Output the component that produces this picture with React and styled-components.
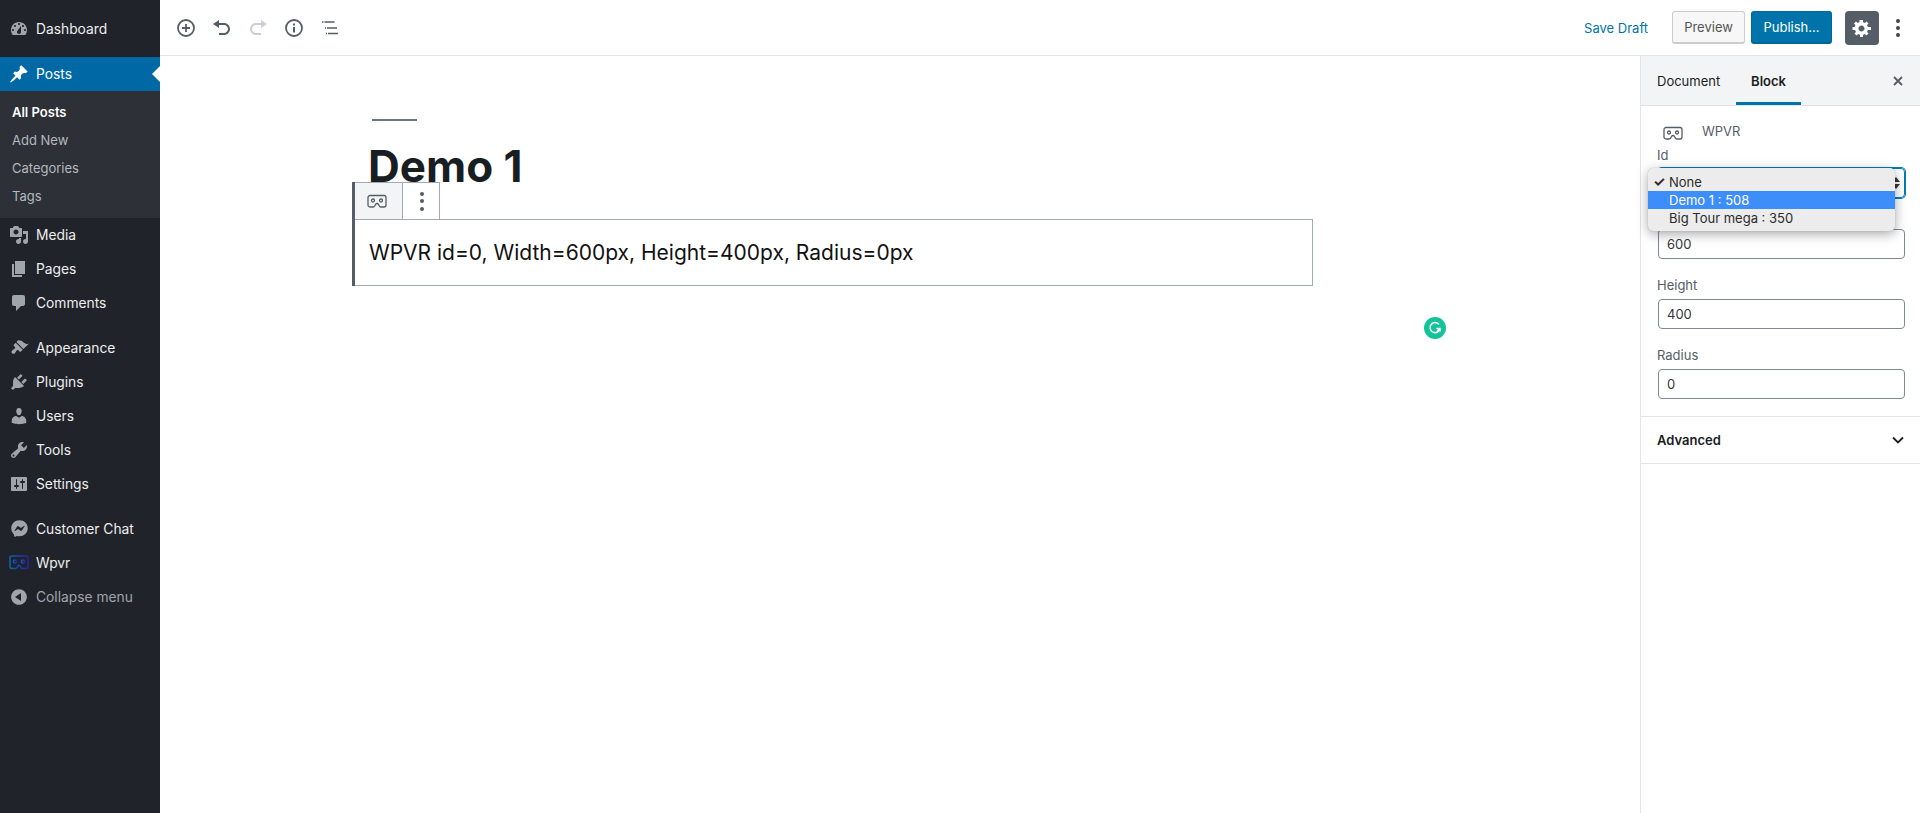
import React from "react";
import styled, { createGlobalStyle } from "styled-components";
import { FaFacebookMessenger } from "react-icons/fa";

const GlobalStyle = createGlobalStyle`
  html, body {
    margin: 0;
    padding: 0;
    height: 100%;
    background: #ffffff;
    font-family: Inter, "Liberation Sans", sans-serif;
    -webkit-font-smoothing: antialiased;
  }
  * {
    box-sizing: border-box;
  }
`;

const ICONS = {
  dashboard:
    "M3.76 16h12.48c1.1-1.37 1.76-3.11 1.76-5 0-4.42-3.58-8-8-8s-8 3.58-8 8c0 1.89.66 3.63 1.76 5zM10 4c.55 0 1 .45 1 1s-.45 1-1 1-1-.45-1-1 .45-1 1-1zM6 6c.55 0 1 .45 1 1s-.45 1-1 1-1-.45-1-1 .45-1 1-1zm8 0c.55 0 1 .45 1 1s-.45 1-1 1-1-.45-1-1 .45-1 1-1zm-5.37 5.55L12 7v6c0 1.1-.9 2-2 2s-2-.9-2-2c0-.57.24-1.08.63-1.45zM4 10c.55 0 1 .45 1 1s-.45 1-1 1-1-.45-1-1 .45-1 1-1zm12 0c.55 0 1 .45 1 1s-.45 1-1 1-1-.45-1-1 .45-1 1-1z",
  pin: "M10.44 3.02l1.82-1.82 6.36 6.35-1.83 1.82c-1.05-.68-2.48-.57-3.41.36l-.75.75c-.92.93-1.04 2.35-.35 3.41l-1.83 1.82-2.41-2.41-2.8 2.79c-.42.42-3.38 2.71-3.8 2.29s1.86-3.39 2.28-3.81l2.79-2.79L4.1 9.36l1.83-1.82c1.05.69 2.48.57 3.4-.36l.75-.75c.93-.92 1.05-2.35.36-3.41z",
  media:
    "M13 11V4c0-.55-.45-1-1-1h-1.67L9 1H5L3.67 3H2c-.55 0-1 .45-1 1v7c0 .55.45 1 1 1h10c.55 0 1-.45 1-1zM7 4.5c1.38 0 2.5 1.12 2.5 2.5S8.38 9.5 7 9.5 4.5 8.38 4.5 7 5.62 4.5 7 4.5zM14 6h5v10.5c0 1.38-1.12 2.5-2.5 2.5S14 17.88 14 16.5s1.12-2.5 2.5-2.5c.17 0 .34.02.5.05V9h-3V6zm-4 8.05V13h2v3.5c0 1.38-1.12 2.5-2.5 2.5S7 17.88 7 16.5 8.12 14 9.5 14c.17 0 .34.02.5.05z",
  page: "M6 15V2h10v13H6zm-1 1h8v2H3V5h2v11z",
  comments:
    "M5 2h9c1.1 0 2 .9 2 2v7c0 1.1-.9 2-2 2h-2l-5 5v-5H5c-1.1 0-2-.9-2-2V4c0-1.1.9-2 2-2z",
  appearance:
    "M14.48 11.06L7.41 3.99l1.5-1.5c.5-.56 2.3-.47 3.51.32 1.21.8 1.43 1.28 2.91 2.1 1.18.64 2.45 1.26 4.45.85zm-.71.71L6.7 4.7 4.93 6.47c-.39.39-.39 1.02 0 1.41l1.06 1.06c.39.39.39 1.03 0 1.42-.6.6-1.43 1.27-2.21 1.59-.26.11-.5.27-.71.48-.78.78-.78 2.05 0 2.83.78.78 2.05.78 2.83 0 .21-.21.37-.45.48-.71.32-.78.99-1.61 1.59-2.21.39-.39 1.02-.39 1.41 0l1.06 1.06c.39.39 1.02.39 1.41 0z",
  plugins:
    "M13.11 4.36L9.87 7.6 8 5.73l3.24-3.24c.35-.34 1.05-.2 1.56.32.52.51.66 1.21.31 1.55zm-8 1.77l.91-1.12 9.01 9.01-1.19.84c-.71.71-2.63 1.16-3.82 1.16H6.14L4.9 17.26c-.59.59-1.54.59-2.12 0-.59-.58-.59-1.53 0-2.12l1.24-1.24v-3.88c0-1.13.4-3.19 1.09-3.89zm7.26 3.97l3.24-3.24c.34-.35 1.04-.21 1.55.31.52.51.66 1.21.31 1.55l-3.24 3.25z",
  users:
    "M10 9.25c-2.27 0-2.73-3.44-2.73-3.44C7 4.02 7.82 2 9.97 2c2.16 0 2.98 2.02 2.71 3.81 0 0-.41 3.44-2.68 3.44zm0 2.57L12.72 10c2.39 0 4.52 2.33 4.52 4.53v2.49s-3.65 1.13-7.24 1.13c-3.65 0-7.24-1.13-7.24-1.13v-2.49c0-2.25 1.94-4.48 4.47-4.48z",
  tools:
    "M16.68 9.77c-1.34 1.34-3.3 1.67-4.95.99l-5.41 6.52c-.99.99-2.59.99-3.58 0s-.99-2.59 0-3.57l6.52-5.42c-.68-1.65-.35-3.61.99-4.95 1.28-1.28 3.12-1.62 4.72-1.06l-2.89 2.89 2.82 2.82 2.86-2.87c.53 1.58.18 3.39-1.08 4.65zM3.81 16.21c.4.39 1.03.39 1.42 0 .4-.4.4-1.03 0-1.43-.39-.39-1.02-.39-1.42 0-.39.4-.39 1.03 0 1.43z",
  settings:
    "M18 16V4c0-.55-.45-1-1-1H3c-.55 0-1 .45-1 1v12c0 .55.45 1 1 1h14c.55 0 1-.45 1-1zM8 11h1c.55 0 1 .45 1 1s-.45 1-1 1H8v1.5c0 .28-.22.5-.5.5s-.5-.22-.5-.5V13H6c-.55 0-1-.45-1-1s.45-1 1-1h1V5.5c0-.28.22-.5.5-.5s.5.22.5.5V11zm5-2h-1c-.55 0-1-.45-1-1s.45-1 1-1h1V5.5c0-.28.22-.5.5-.5s.5.22.5.5V7h1c.55 0 1 .45 1 1s-.45 1-1 1h-1v5.5c0 .28-.22.5-.5.5s-.5-.22-.5-.5V9z",
  collapse:
    "M10 2.16c4.33 0 7.84 3.51 7.84 7.84s-3.51 7.84-7.84 7.84S2.16 14.33 2.16 10 5.67 2.16 10 2.16zM12 14V6l-6 4z",
  undo: "M12 5H7V2L1 6l6 4V7h5c2.2 0 4 1.8 4 4s-1.8 4-4 4H7v2h5c3.31 0 6-2.69 6-6s-2.69-6-6-6z",
  redo: "M8 5h5V2l6 4-6 4V7H8c-2.2 0-4 1.8-4 4s1.8 4 4 4h5v2H8c-3.31 0-6-2.69-6-6s2.69-6 6-6z",
  gear: "M18 12h-2.18c-.17.7-.44 1.35-.81 1.93l1.54 1.54-2.1 2.1-1.54-1.54c-.58.36-1.23.64-1.91.81V19H8v-2.18c-.68-.17-1.33-.45-1.91-.81l-1.54 1.54-2.12-2.12 1.54-1.54c-.36-.58-.64-1.23-.81-1.91H.5V9h2.16c.17-.68.45-1.33.81-1.91L1.93 5.55l2.12-2.12 1.54 1.54c.58-.36 1.23-.64 1.91-.81V2H11v2.16c.68.17 1.33.45 1.91.81l1.54-1.54 2.12 2.12-1.54 1.54c.36.58.64 1.23.81 1.91H19V12zM9.5 13.5c1.66 0 3-1.34 3-3s-1.34-3-3-3-3 1.34-3 3 1.34 3 3 3z",
};

const Glyph = ({ name, size = 20, color = "currentColor" }) => (
  <svg width={size} height={size} viewBox="0 0 20 20" fill={color} fillRule="evenodd">
    <path d={ICONS[name]} />
  </svg>
);

const Goggles = ({ width = 20, color = "#555d66" }) => (
  <svg width={width} height={width * 0.75} viewBox="0 0 20 15" fill="none" stroke={color} strokeWidth="1.3">
    <path d="M3 1.500h14a2 2 0 0 1 2 2v7.500a2 2 0 0 1-2 2h-3c-1 0-1.500-.5-2-1.500l-.5-1c-.4-.7-.8-1-1.500-1s-1.100.3-1.500 1l-.5 1c-.5 1-1 1.500-2 1.500H3a2 2 0 0 1-2-2V3.500a2 2 0 0 1 2-2z" />
    <circle cx="6" cy="6.500" r="1.500" />
    <circle cx="14" cy="6.500" r="1.500" />
  </svg>
);

const Page = styled.div`
  display: flex;
  height: 100vh;
  overflow: hidden;
`;

const Sidebar = styled.nav`
  width: 160px;
  flex-shrink: 0;
  padding-top: 12px;
  background: #20232a;
`;

const MenuItem = styled.div`
  position: relative;
  display: flex;
  align-items: center;
  height: 34px;
  padding: 0 0 1px 9px;
  margin-bottom: ${({ $gap }) => ($gap ? "11px" : "0")};
  font-size: 13.8px;
  color: ${({ $active, $muted }) => ($active ? "#ffffff" : $muted ? "#a0a5aa" : "#eeeeee")};
  background: ${({ $active }) => ($active ? "#0069a5" : "transparent")};
`;

const MenuIcon = styled.span`
  display: flex;
  justify-content: center;
  width: 20px;
  margin-right: 7px;
  color: ${({ $active }) => ($active ? "#ffffff" : "#a0a5aa")};
`;

const ActiveArrow = styled.span`
  position: absolute;
  right: 0;
  top: 9px;
  border: 8px solid transparent;
  border-left-width: 0;
  border-right-color: #ffffff;
`;

const SubMenu = styled.div`
  padding: 7px 0 8px;
  background: #2d3036;
`;

const SubItem = styled.div`
  display: flex;
  align-items: center;
  height: 28px;
  padding-left: 12px;
  font-size: 13px;
  font-weight: ${({ $current }) => ($current ? 600 : 400)};
  color: ${({ $current }) => ($current ? "#ffffff" : "#b4b9be")};
`;

const Main = styled.div`
  flex: 1;
  display: flex;
  flex-direction: column;
  min-width: 0;
`;

const TopBar = styled.header`
  display: flex;
  align-items: center;
  justify-content: space-between;
  height: 56px;
  flex-shrink: 0;
  padding: 0 7px 0 8px;
  border-bottom: 1px solid #e2e4e7;
`;

const ToolGroup = styled.div`
  display: flex;
  align-items: center;
`;

const ToolIcon = styled.span`
  display: flex;
  align-items: center;
  justify-content: center;
  width: 36px;
  height: 36px;
  color: ${({ $disabled }) => ($disabled ? "#ccd0d4" : "#555d66")};
`;

const SaveDraft = styled.span`
  margin-right: 24px;
  font-size: 13px;
  color: #0073aa;
`;

const Button = styled.span`
  display: flex;
  align-items: center;
  justify-content: center;
  height: 33px;
  margin-right: 6px;
  font-size: 13px;
  border-radius: 3px;
  border: 1px solid ${({ $primary }) => ($primary ? "#006799" : "#cccccc")};
  border-bottom-width: 2px;
  width: ${({ $primary }) => ($primary ? "81px" : "73px")};
  color: ${({ $primary }) => ($primary ? "#ffffff" : "#555555")};
  background: ${({ $primary }) => ($primary ? "#0073aa" : "#f7f7f7")};
`;

const GearButton = styled.span`
  display: flex;
  align-items: center;
  justify-content: center;
  width: 34px;
  height: 34px;
  margin-left: 7px;
  border-radius: 4px;
  color: #ffffff;
  background: #555d66;
`;

const MoreDots = styled.span`
  display: flex;
  flex-direction: column;
  align-items: center;
  gap: 3px;
  width: 30px;
  margin-left: 4px;
  padding-right: 1px;
`;

const Dot = styled.i`
  width: 4px;
  height: 4px;
  border-radius: 50%;
  background: ${({ $dark }) => ($dark ? "#40464d" : "#555d66")};
`;

const Body = styled.div`
  flex: 1;
  display: flex;
  min-height: 0;
`;

const Editor = styled.main`
  position: relative;
  flex: 1;
  padding: 63px 0 0 192px;
`;

const TitleRule = styled.div`
  width: 45px;
  height: 2px;
  margin-left: 20px;
  background: #6c7781;
`;

const Title = styled.h1`
  margin: 19px 0 0 16px;
  height: 42px;
  font-size: 44px;
  line-height: 52px;
  font-weight: 700;
  color: #191e23;
`;

const Block = styled.section`
  width: 961px;
  border-left: 3px solid #555d66;
`;

const BlockToolbar = styled.div`
  display: flex;
  width: 85px;
  height: 37px;
  border-top: 1px solid #a2aab2;
  border-right: 1px solid #a2aab2;
`;

const BlockTool = styled.span`
  display: flex;
  align-items: center;
  justify-content: center;
  width: ${({ $wide }) => ($wide ? "49px" : "36px")};
  padding-right: ${({ $wide }) => ($wide ? "3px" : "0")};
  padding-left: ${({ $wide }) => ($wide ? "0" : "2px")};
  border-right: ${({ $wide }) => ($wide ? "1px solid #a2aab2" : "none")};
  background: ${({ $wide }) => ($wide ? "#f3f4f5" : "#ffffff")};
`;

const BlockDots = styled.span`
  display: flex;
  flex-direction: column;
  gap: 3.500px;
`;

const BlockBody = styled.div`
  display: flex;
  align-items: center;
  height: 67px;
  padding-left: 14px;
  border: 1px solid #a2aab2;
  border-left: none;
  font-size: 21px;
  color: #111111;
`;

const Grammarly = styled.span`
  position: absolute;
  left: 1264px;
  top: 261px;
  display: flex;
  align-items: center;
  justify-content: center;
  width: 22px;
  height: 22px;
  border-radius: 50%;
  background: #15c39a;
`;

const Panel = styled.aside`
  width: 280px;
  flex-shrink: 0;
  border-left: 1px solid #e2e4e7;
`;

const Tabs = styled.div`
  display: flex;
  align-items: stretch;
  height: 50px;
  background: #f3f4f5;
  border-bottom: 1px solid #e2e4e7;
`;

const Tab = styled.span`
  display: flex;
  align-items: center;
  justify-content: ${({ $active }) => ($active ? "center" : "flex-start")};
  width: ${({ $active }) => ($active ? "65px" : "95px")};
  padding-left: ${({ $active }) => ($active ? "0" : "16px")};
  font-size: 13px;
  font-weight: ${({ $active }) => ($active ? 600 : 400)};
  color: #191e23;
  box-shadow: ${({ $active }) => ($active ? "inset 0 -3px 0 #0073aa" : "none")};
`;

const TabClose = styled.span`
  display: flex;
  align-items: center;
  margin-left: auto;
  margin-right: 15px;
  color: #555d66;
`;

const BlockCard = styled.div`
  display: flex;
  align-items: flex-start;
  height: 40px;
  padding: 20px 0 0 22px;
  font-size: 13px;
  color: #555d66;
`;

const CardName = styled.span`
  margin: -3px 0 0 19px;
`;

const Fields = styled.div`
  padding: 0 15px 0 16px;
`;

const Field = styled.div`
  position: relative;
  margin-bottom: ${({ $select }) => ($select ? "6px" : "15px")};
`;

const FieldLabel = styled.label`
  display: block;
  height: ${({ $tight }) => ($tight ? "22px" : "21px")};
  margin-bottom: ${({ $tight }) => ($tight ? "0" : "4px")};
  font-size: 13px;
  line-height: ${({ $tight }) => ($tight ? "18px" : "22px")};
  color: #555d66;
`;

const Input = styled.div`
  display: flex;
  align-items: center;
  height: 30px;
  margin-left: 1px;
  padding-left: 8px;
  font-size: 13px;
  color: #32373c;
  border: 1px solid #7e8993;
  border-radius: 4px;
`;

const SelectBox = styled(Input)`
  justify-content: flex-end;
  padding-right: 4px;
  border-color: #007cba;
  box-shadow: 0 0 0 1px #007cba;
`;

const SelectArrows = styled.span`
  display: flex;
  flex-direction: column;
  gap: 2px;
`;

const SelectArrow = styled.i`
  width: 0;
  height: 0;
  border: 4px solid transparent;
  border-top-width: ${({ $up }) => ($up ? "0" : "5px")};
  border-bottom-width: ${({ $up }) => ($up ? "5px" : "0")};
  border-top-color: ${({ $up }) => ($up ? "transparent" : "#32373c")};
  border-bottom-color: ${({ $up }) => ($up ? "#32373c" : "transparent")};
`;

const Popup = styled.div`
  position: absolute;
  left: -9px;
  top: 22px;
  z-index: 2;
  width: 247px;
  height: 63px;
  padding-top: 5px;
  background: #ececec;
  border-radius: 5px;
  box-shadow: 0 3px 12px rgba(0, 0, 0, 0.35), 0 0 1px rgba(0, 0, 0, 0.3);
`;

const PopupItem = styled.div`
  position: relative;
  height: 18px;
  padding-left: 21px;
  font-size: 13px;
  line-height: 18px;
  color: ${({ $highlight }) => ($highlight ? "#ffffff" : "#2b2b2b")};
  background: ${({ $highlight }) => ($highlight ? "#3d8efa" : "transparent")};
`;

const PopupCheck = styled.span`
  position: absolute;
  left: 5px;
  top: 0;
  font-size: 14px;
  font-weight: 700;
`;

const Advanced = styled.div`
  display: flex;
  align-items: center;
  justify-content: space-between;
  height: 48px;
  margin-top: 17px;
  padding: 0 15px 0 16px;
  font-size: 13px;
  font-weight: 600;
  color: #191e23;
  border-top: 1px solid #e2e4e7;
  border-bottom: 1px solid #e2e4e7;
`;

const MENU_TOP = [{ icon: "dashboard", label: "Dashboard", gap: true }];

const MENU_MIDDLE = [
  { icon: "media", label: "Media" },
  { icon: "page", label: "Pages" },
  { icon: "comments", label: "Comments", gap: true },
  { icon: "appearance", label: "Appearance" },
  { icon: "plugins", label: "Plugins" },
  { icon: "users", label: "Users" },
  { icon: "tools", label: "Tools" },
  { icon: "settings", label: "Settings", gap: true },
];

const SUB_ITEMS = ["All Posts", "Add New", "Categories", "Tags"];

const renderItem = (item) => (
  <MenuItem key={item.label} $gap={item.gap}>
    <MenuIcon>
      <Glyph name={item.icon} />
    </MenuIcon>
    {item.label}
  </MenuItem>
);

const App = () => (
  <Page>
    <GlobalStyle />
    <Sidebar>
      {MENU_TOP.map(renderItem)}
      <MenuItem $active>
        <MenuIcon $active>
          <Glyph name="pin" />
        </MenuIcon>
        Posts
        <ActiveArrow />
      </MenuItem>
      <SubMenu>
        {SUB_ITEMS.map((label, i) => (
          <SubItem key={label} $current={i === 0}>
            {label}
          </SubItem>
        ))}
      </SubMenu>
      {MENU_MIDDLE.map(renderItem)}
      <MenuItem>
        <MenuIcon>
          <FaFacebookMessenger size={17} />
        </MenuIcon>
        Customer Chat
      </MenuItem>
      <MenuItem>
        <MenuIcon>
          <svg width="21" height="15" viewBox="0 0 20 15" fill="none" strokeWidth="1.500">
            <defs>
              <linearGradient id="wpvrGrad" x1="0" x2="1" y1="0" y2="0">
                <stop offset="0" stopColor="#0c62b0" />
                <stop offset="1" stopColor="#2a20a8" />
              </linearGradient>
            </defs>
            <path
              stroke="url(#wpvrGrad)"
              d="M3 1h14a2 2 0 0 1 2 2v8.500a2 2 0 0 1-2 2h-3.500c-1 0-1.500-.5-2-1.500l-.5-1c-.3-.5-.7-.7-1-.7s-.7.2-1 .7l-.5 1c-.5 1-1 1.500-2 1.500H3a2 2 0 0 1-2-2V3a2 2 0 0 1 2-2z"
            />
            <circle cx="6" cy="6.500" r="1.600" stroke="url(#wpvrGrad)" />
            <circle cx="14" cy="6.500" r="1.600" stroke="url(#wpvrGrad)" />
          </svg>
        </MenuIcon>
        Wpvr
      </MenuItem>
      <MenuItem $muted>
        <MenuIcon>
          <Glyph name="collapse" />
        </MenuIcon>
        Collapse menu
      </MenuItem>
    </Sidebar>

    <Main>
      <TopBar>
        <ToolGroup>
          <ToolIcon>
            <svg width="20" height="20" viewBox="0 0 20 20" fill="none" stroke="currentColor" strokeWidth="1.800">
              <circle cx="10" cy="10" r="8" />
              <path d="M10 6v8M6 10h8" />
            </svg>
          </ToolIcon>
          <ToolIcon>
            <Glyph name="undo" />
          </ToolIcon>
          <ToolIcon $disabled>
            <Glyph name="redo" />
          </ToolIcon>
          <ToolIcon>
            <svg width="20" height="20" viewBox="0 0 20 20" fill="none" stroke="currentColor" strokeWidth="1.800">
              <circle cx="10" cy="10" r="8" />
              <path d="M10 9v5.500" strokeWidth="2" />
              <path d="M10 5.500v2" strokeWidth="2" />
            </svg>
          </ToolIcon>
          <ToolIcon>
            <svg width="20" height="20" viewBox="0 0 20 20" fill="none" stroke="currentColor" strokeWidth="1.500">
              <path d="M2 4h1.500M4.500 4h10M5 10h1M7 10h10M6 15.500h1M8 15.500h10" />
            </svg>
          </ToolIcon>
        </ToolGroup>
        <ToolGroup>
          <SaveDraft>Save Draft</SaveDraft>
          <Button>Preview</Button>
          <Button $primary>Publish...</Button>
          <GearButton>
            <Glyph name="gear" size={20} />
          </GearButton>
          <MoreDots>
            <Dot $dark />
            <Dot $dark />
            <Dot $dark />
          </MoreDots>
        </ToolGroup>
      </TopBar>

      <Body>
        <Editor>
          <TitleRule />
          <Title>Demo 1</Title>
          <Block>
            <BlockToolbar>
              <BlockTool $wide>
                <Goggles />
              </BlockTool>
              <BlockTool>
                <BlockDots>
                  <Dot />
                  <Dot />
                  <Dot />
                </BlockDots>
              </BlockTool>
            </BlockToolbar>
            <BlockBody>WPVR id=0, Width=600px, Height=400px, Radius=0px</BlockBody>
          </Block>
          <Grammarly>
            <svg width="14" height="14" viewBox="0 0 14 14" fill="none" stroke="#ffffff" strokeWidth="1.500">
              <path d="M11 3.500A5 5 0 1 0 12 7.500H8.500M12 7.500v3M12 7.500l-3 3" />
            </svg>
          </Grammarly>
        </Editor>

        <Panel>
          <Tabs>
            <Tab>Document</Tab>
            <Tab $active>Block</Tab>
            <TabClose>
              <svg width="14" height="14" viewBox="0 0 14 14" stroke="currentColor" strokeWidth="1.800">
                <path d="M3 3l8 8M11 3l-8 8" />
              </svg>
            </TabClose>
          </Tabs>
          <BlockCard>
            <Goggles />
            <CardName>WPVR</CardName>
          </BlockCard>
          <Fields>
            <Field $select>
              <FieldLabel $tight>Id</FieldLabel>
              <SelectBox>
                <SelectArrows>
                  <SelectArrow $up />
                  <SelectArrow />
                </SelectArrows>
              </SelectBox>
              <Popup>
                <PopupItem>
                  <PopupCheck>✓</PopupCheck>
                  None
                </PopupItem>
                <PopupItem $highlight>Demo 1 : 508</PopupItem>
                <PopupItem>Big Tour mega : 350</PopupItem>
              </Popup>
            </Field>
            <Field>
              {/* the label of this input sits behind the open dropdown */}
              <FieldLabel />
              <Input>600</Input>
            </Field>
            <Field>
              <FieldLabel>Height</FieldLabel>
              <Input>400</Input>
            </Field>
            <Field>
              <FieldLabel>Radius</FieldLabel>
              <Input>0</Input>
            </Field>
          </Fields>
          <Advanced>
            Advanced
            <svg width="14" height="14" viewBox="0 0 14 14" fill="none" stroke="#191e23" strokeWidth="1.800">
              <path d="M2 4.500l5 5 5-5" />
            </svg>
          </Advanced>
        </Panel>
      </Body>
    </Main>
  </Page>
);

export default App;
